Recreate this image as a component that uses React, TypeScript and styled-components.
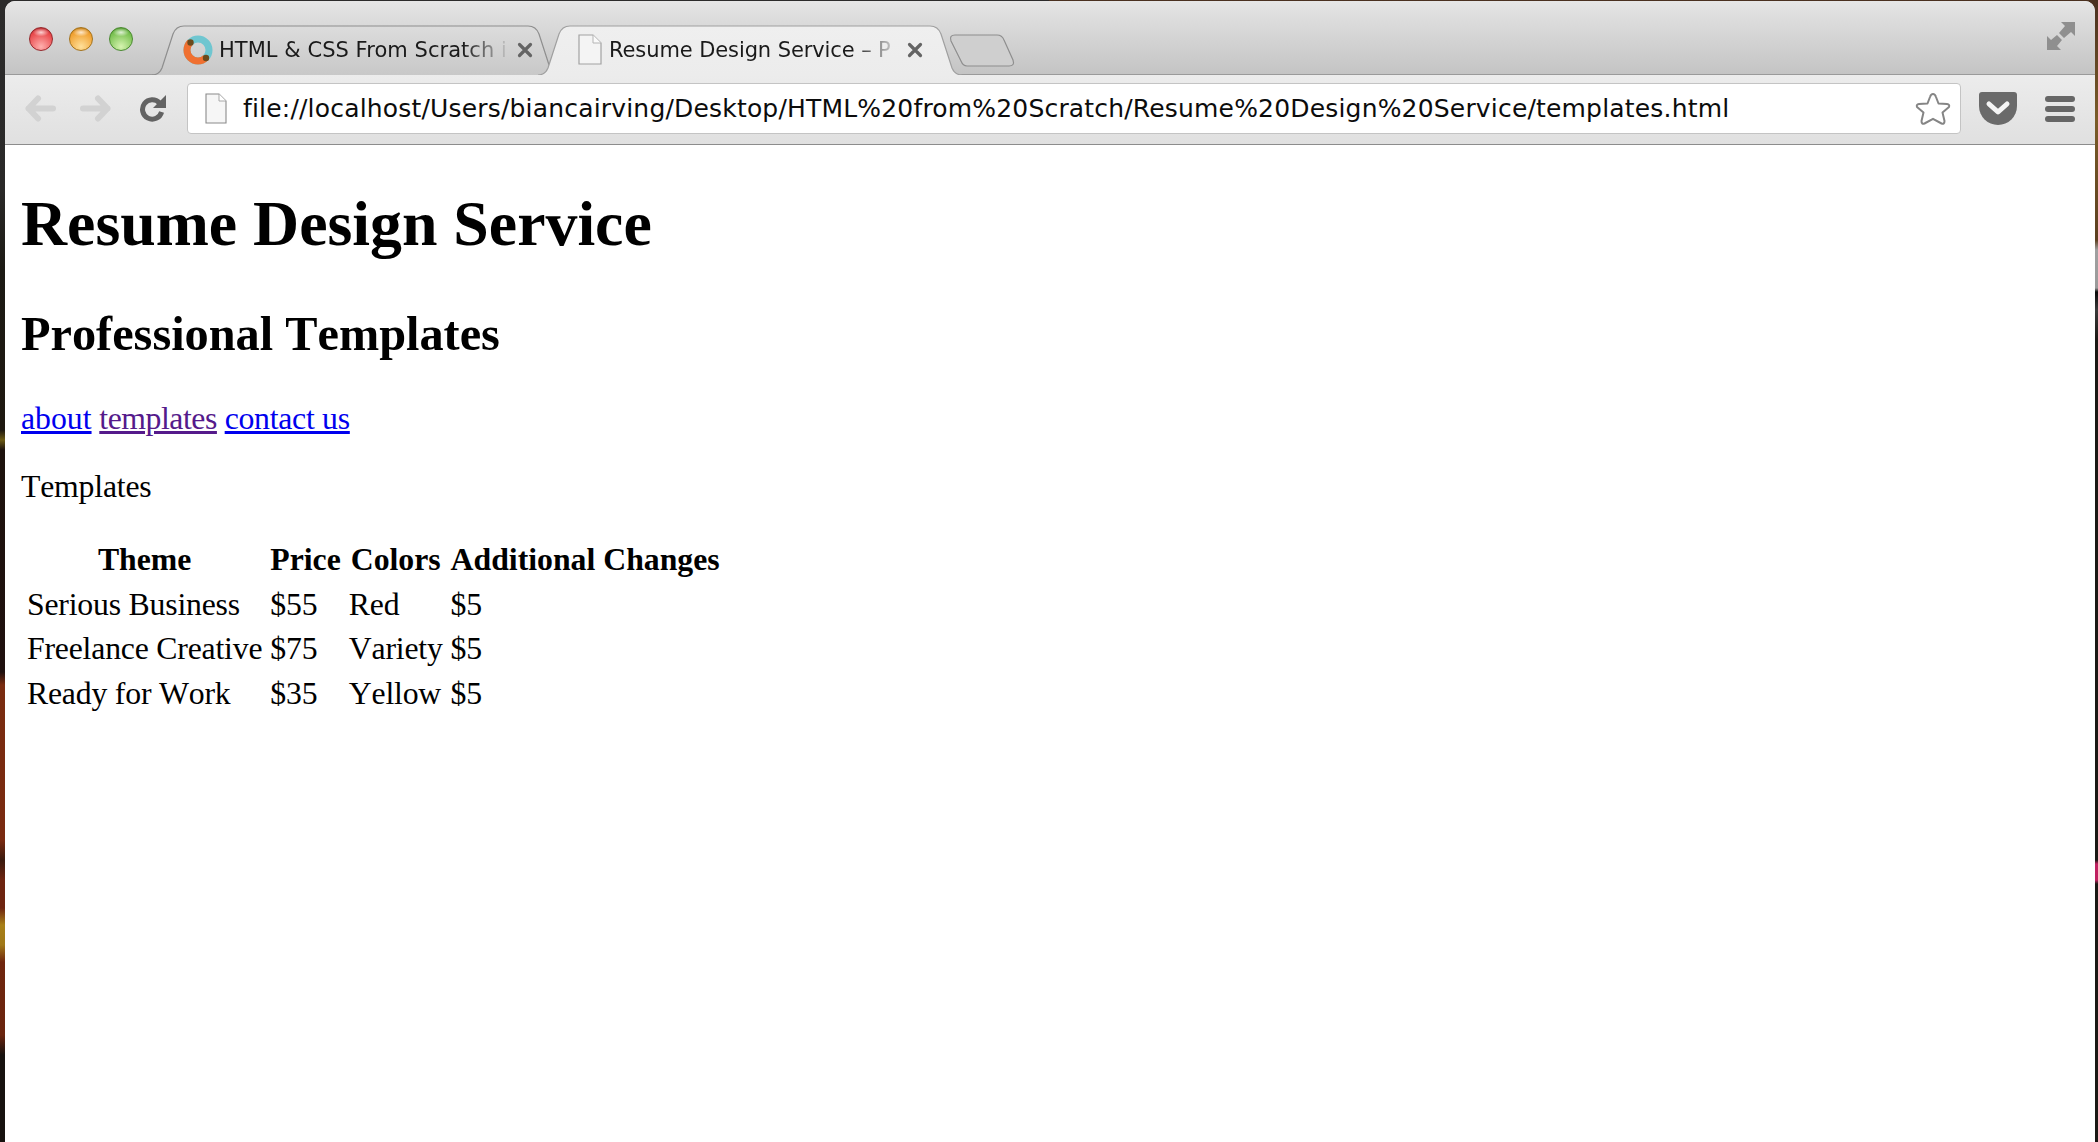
import React from 'react'
import styled, { createGlobalStyle } from 'styled-components'

const GlobalStyle = createGlobalStyle`
  html, body {
    margin: 0;
    padding: 0;
    background: #1a1814;
  }
`

const Desktop = styled.div`
  box-sizing: border-box;
  width: 2098px;
  height: 1142px;
  overflow: hidden;
  padding: 1px 3px 0 5px;
  background:
    linear-gradient(180deg, #2c2b2b 0, #2a2928 190px, #1c1a14 270px, #1e1810 430px, #6b5a14 440px, #1d120d 450px, #1f100e 672px, #7a2c10 685px, #7a2a10 840px, #3a1a0e 860px, #6e2410 880px, #6e2410 908px, #a88018 925px, #a07818 945px, #70260e 962px, #6a240e 1035px, #17120f 1055px, #17120f 1142px) left top / 50% 100% no-repeat,
    linear-gradient(180deg, #4a3020 0, #7a5c28 120px, #5c4020 240px, #a0a0a0 250px, #9a9a9a 288px, #0a0a0a 292px, #3a3a3a 310px, #1a1814 340px, #1a1814 860px, #c02060 864px, #c02060 880px, #1a1814 884px, #1a1814 1142px) right top / 50% 100% no-repeat;
`

const Window = styled.div`
  display: flex;
  flex-direction: column;
  height: 100%;
  border-radius: 10px 10px 0 0;
  overflow: hidden;
  background: #fff;
`

const TitleBar = styled.div`
  display: flex;
  flex: none;
  height: 73px;
  border-bottom: 1px solid #9a9a9a;
  background: linear-gradient(180deg, #e6e6e6 0, #dedede 20%, #c4c4c4 100%);
`

const Lights = styled.div`
  display: flex;
  flex: none;
  gap: 16px;
  margin: 26px 20px 0 24px;
`

const Light = styled.span<{ $hi: string; $mid: string; $rim: string }>`
  width: 24px;
  height: 24px;
  border-radius: 50%;
  box-sizing: border-box;
  border: 1px solid ${({ $rim }) => $rim};
  background:
    radial-gradient(ellipse 8px 4px at 50% 20%, rgba(255, 255, 255, 0.75), rgba(255, 255, 255, 0) 100%),
    radial-gradient(circle at 50% 85%, ${({ $hi }) => $hi} 0, ${({ $mid }) => $mid} 70%, ${({ $rim }) => $rim} 100%);
`

const TabStrip = styled.div`
  display: flex;
  flex: none;
  align-self: flex-end;
  margin-bottom: -1px;
  margin-left: -1px;
`

const Tab = styled.div<{ $width: number; $active?: boolean; $pad: number }>`
  position: relative;
  z-index: ${({ $active }) => ($active ? 2 : 1)};
  display: flex;
  align-items: center;
  flex: none;
  box-sizing: border-box;
  width: ${({ $width }) => $width}px;
  height: 50px;
  padding: 0 0 1px ${({ $pad }) => $pad}px;
  margin-left: ${({ $active }) => ($active ? '-22px' : '0')};
`

const TabShape = styled.svg`
  position: absolute;
  left: 0;
  top: 0;
  width: 100%;
  height: 100%;
`

const TabIcon = styled.svg<{ $gap: number }>`
  position: relative;
  flex: none;
  margin-right: ${({ $gap }) => $gap}px;
`

const TabTitle = styled.span<{ $spacing: number }>`
  position: relative;
  flex: none;
  width: 290px;
  white-space: nowrap;
  font: 400 21px 'DejaVu Sans', sans-serif;
  letter-spacing: ${({ $spacing }) => $spacing}px;
  color: #1a1a1a;
  -webkit-mask-image: linear-gradient(90deg, #000 84%, rgba(0, 0, 0, 0.1) 99%);
  mask-image: linear-gradient(90deg, #000 84%, rgba(0, 0, 0, 0.1) 99%);
`

const CloseIcon = styled.svg`
  position: relative;
  flex: none;
  margin-left: 8px;
`

const NewTab = styled.svg`
  position: relative;
  flex: none;
  align-self: flex-start;
  margin: 9px 0 0 -13px;
`

const ExpandIcon = styled.svg`
  flex: none;
  margin: 21px 20px 0 auto;
`

const Toolbar = styled.div`
  display: flex;
  align-items: center;
  flex: none;
  height: 70px;
  box-sizing: border-box;
  padding: 0 0 2px 20px;
  border-bottom: 1px solid #8c8c8c;
  background: linear-gradient(180deg, #ececec 0, #e0e0e0 100%);
`

const NavIcon = styled.svg<{ $left?: number; $right: number }>`
  flex: none;
  margin-left: ${({ $left }) => $left ?? 0}px;
  margin-right: ${({ $right }) => $right}px;
`

const Omnibox = styled.div`
  display: flex;
  align-items: center;
  flex: none;
  box-sizing: border-box;
  width: 1774px;
  height: 51px;
  padding: 0 9px 0 17px;
  background: #fff;
  border: 1px solid #c4c4c4;
  border-radius: 4px;
`

const OmniIcon = styled.svg`
  flex: none;
`

const Url = styled.span`
  flex: 1;
  margin-left: 16px;
  white-space: nowrap;
  font: 400 25px 'DejaVu Sans', sans-serif;
  letter-spacing: 0.18px;
  color: #0c0c0c;
`

const Page = styled.main`
  display: flow-root;
  flex: 1;
  padding: 0 16px;
  background: #fff;
  color: #000;
  font: 400 31.76px/1.149 'Liberation Serif', 'Times New Roman', serif;
  font-kerning: none;
  font-variant-ligatures: none;
`

const Heading = styled.h1`
  margin: 41.5px 0 46.5px;
  font-size: 63.8px;
  font-weight: 700;
`

const SubHeading = styled.h2`
  margin: 0 0 39.7px;
  font-size: 48.3px;
  font-weight: 700;
`

const Para = styled.p`
  margin: 31px 0;
  letter-spacing: -0.2px;
`

const NavLink = styled.a<{ $visited?: boolean; $spacing?: number }>`
  color: ${({ $visited }) => ($visited ? '#551a8b' : '#0000ee')};
  letter-spacing: ${({ $spacing }) => $spacing ?? 0}px;
  text-decoration: underline;
`

const Table = styled.table`
  border-collapse: separate;
  border-spacing: 4px;
`

const HeadCell = styled.th`
  padding: 2px;
  font-weight: 700;
  text-align: center;
`

const Cell = styled.td`
  padding: 2px;
  letter-spacing: -0.2px;
`

const shapeFor = (w: number) =>
  `M0 50 Q7 50 10 43 L21 9 Q24 1 32 1 L${w - 32} 1 Q${w - 24} 1 ${w - 21} 9 L${w - 10} 43 Q${w - 7} 50 ${w} 50`

const TabBackground = ({ width, active }: { width: number; active?: boolean }) => (
  <TabShape viewBox={`0 0 ${width} 50`} preserveAspectRatio="none">
    <defs>
      <linearGradient id={active ? 'tabOn' : 'tabOff'} x1="0" y1="0" x2="0" y2="1">
        <stop offset="0" stopColor={active ? '#efefef' : '#dcdcdc'} />
        <stop offset="1" stopColor={active ? '#ececec' : '#c8c8c8'} />
      </linearGradient>
    </defs>
    <path d={shapeFor(width)} fill={`url(#${active ? 'tabOn' : 'tabOff'})`} stroke={active ? '#a0a0a0' : '#8e8e8e'} strokeWidth="1.2" />
  </TabShape>
)

const Favicon = () => (
  <TabIcon $gap={6} width="30" height="30" viewBox="0 0 30 30">
    <circle cx="15" cy="15" r="11" fill="none" stroke="#6fc6d0" strokeWidth="7" />
    <path d="M7.2 7.2 A11 11 0 0 0 22.8 22.8" fill="none" stroke="#f07030" strokeWidth="7" />
    <circle cx="7.5" cy="7.5" r="3.2" fill="#6b4a1c" />
    <circle cx="23" cy="23" r="3.2" fill="#6b4a1c" />
  </TabIcon>
)

const PageIcon = () => (
  <TabIcon $gap={7} width="24" height="31" viewBox="0 0 24 31">
    <path d="M1 1 H15 L23 9 V30 H1 Z" fill="#f4f4f4" stroke="#a2a2a2" strokeWidth="1.2" />
    <path d="M15 1 V9 H23" fill="#fafafa" stroke="#b4b4b4" strokeWidth="1" />
  </TabIcon>
)

const Close = () => (
  <CloseIcon width="16" height="16" viewBox="0 0 16 16">
    <path d="M2.5 2.5 L13.5 13.5 M13.5 2.5 L2.5 13.5" stroke="#646464" strokeWidth="3.2" strokeLinecap="round" />
  </CloseIcon>
)

const rows = [
  ['Serious Business', '$55', 'Red', '$5'],
  ['Freelance Creative', '$75', 'Variety', '$5'],
  ['Ready for Work', '$35', 'Yellow', '$5'],
]

const App = () => (
  <Desktop>
    <GlobalStyle />
    <Window>
      <TitleBar>
        <Lights>
          <Light $hi="#ffb0ae" $mid="#e8474a" $rim="#97282c" />
          <Light $hi="#ffe09a" $mid="#f0a030" $rim="#a5731c" />
          <Light $hi="#d6f4b0" $mid="#78c050" $rim="#4a8a30" />
        </Lights>
        <TabStrip>
          <Tab $width={408} $pad={31}>
            <TabBackground width={408} />
            <Favicon />
            <TabTitle $spacing={0.04}>HTML &amp; CSS From Scratch i</TabTitle>
            <Close />
          </Tab>
          <Tab $width={424} $active $pad={40}>
            <TabBackground width={424} active />
            <PageIcon />
            <TabTitle $spacing={-0.1}>Resume Design Service – P</TabTitle>
            <Close />
          </Tab>
          <NewTab width="66" height="33" viewBox="0 0 66 33">
            <path d="M6 1 H48 Q53 1 55 6 L64 26 Q66 32 60 32 H18 Q14 32 12 27 L2 7 Q0 1 6 1 Z" fill="#cfcfcf" stroke="#8e8e8e" strokeWidth="1.2" />
          </NewTab>
        </TabStrip>
        <ExpandIcon width="28" height="28" viewBox="0 0 28 28">
          <path d="M28 0 H14 L18 4 L12 11 L17 16 L24 10 L28 14 Z" fill="#8f8f8f" />
          <path d="M0 28 H14 L10 24 L15 18 L10 13 L4 18 L0 14 Z" fill="#8f8f8f" />
        </ExpandIcon>
      </TitleBar>
      <Toolbar>
        <NavIcon $right={24} width="31" height="27" viewBox="0 0 31 27">
          <path d="M13 3.5 L3.5 13.5 L13 23.5 M3.5 13.5 H28" fill="none" stroke="#d2d2d2" strokeWidth="6" strokeLinecap="round" strokeLinejoin="round" />
        </NavIcon>
        <NavIcon $right={28} width="31" height="27" viewBox="0 0 31 27">
          <path d="M18 3.5 L27.5 13.5 L18 23.5 M27.5 13.5 H3" fill="none" stroke="#d2d2d2" strokeWidth="6" strokeLinecap="round" strokeLinejoin="round" />
        </NavIcon>
        <NavIcon $right={21} width="27" height="27" viewBox="0 0 27 27">
          <path d="M20.5 8 A9.7 9.7 0 1 0 22.6 17" fill="none" stroke="#636363" strokeWidth="5" />
          <path d="M27 0 V13 H14 Z" fill="#636363" />
        </NavIcon>
        <Omnibox>
          <OmniIcon width="22" height="31" viewBox="0 0 22 31">
            <path d="M1 1 H14 L21 8 V30 H1 Z" fill="#f6f6f6" stroke="#8a8a8a" strokeWidth="1.1" />
            <path d="M14 1 V8 H21" fill="#fff" stroke="#a8a8a8" strokeWidth="1" />
          </OmniIcon>
          <Url>file://localhost/Users/biancairving/Desktop/HTML%20from%20Scratch/Resume%20Design%20Service/templates.html</Url>
          <OmniIcon width="36" height="34" viewBox="0 0 36 34">
            <path d="M18 2 Q20 2 21 5 L23.5 11.5 L32 12 Q35 12.5 34 15 L27.5 20.5 L29.5 29 Q29.5 32.5 26.5 31.5 L18 26.8 L9.5 31.5 Q6.5 32.5 6.5 29 L8.5 20.5 L2 15 Q1 12.5 4 12 L12.5 11.5 L15 5 Q16 2 18 2 Z" fill="#fff" stroke="#858585" strokeWidth="2" strokeLinejoin="round" />
          </OmniIcon>
        </Omnibox>
        <NavIcon $left={18} $right={28} width="38" height="33" viewBox="0 0 38 33">
          <path d="M3 0 H35 Q38 0 38 3 V14 A19 19 0 0 1 0 14 V3 Q0 0 3 0 Z" fill="#6a6a6a" />
          <path d="M10 12 L19 20 L28 12" fill="none" stroke="#f4f4f4" strokeWidth="5" strokeLinecap="round" strokeLinejoin="round" />
        </NavIcon>
        <NavIcon $right={0} width="30" height="26" viewBox="0 0 30 26">
          <rect x="0" y="0" width="30" height="6" rx="3" fill="#666" />
          <rect x="0" y="10" width="30" height="6" rx="3" fill="#666" />
          <rect x="0" y="20" width="30" height="6" rx="3" fill="#666" />
        </NavIcon>
      </Toolbar>
      <Page>
        <Heading>Resume Design Service</Heading>
        <SubHeading>Professional Templates</SubHeading>
        <Para>
          <NavLink href="#about">about</NavLink> <NavLink href="#templates" $visited $spacing={-0.45}>templates</NavLink>{' '}
          <NavLink href="#contact" $spacing={-0.27}>contact us</NavLink>
        </Para>
        <Para>Templates</Para>
        <Table>
          <thead>
            <tr>
              <HeadCell>Theme</HeadCell>
              <HeadCell>Price</HeadCell>
              <HeadCell>Colors</HeadCell>
              <HeadCell>Additional Changes</HeadCell>
            </tr>
          </thead>
          <tbody>
            {rows.map((row) => (
              <tr key={row[0]}>
                {row.map((value, i) => (
                  <Cell key={i}>{value}</Cell>
                ))}
              </tr>
            ))}
          </tbody>
        </Table>
      </Page>
    </Window>
  </Desktop>
)

export default App
